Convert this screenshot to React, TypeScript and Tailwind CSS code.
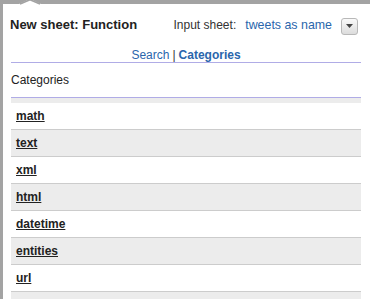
import React from "react";

const items = ["math", "text", "xml", "html", "datetime", "entities", "url"];

export default function App() {
  return (
    <div
      className="relative w-[370px] h-[299px] overflow-hidden bg-white"
      style={{ fontFamily: '"Liberation Sans", Arial, sans-serif' }}
    >
      <div className="h-full border-t-4 border-l-[3px] border-[#a3a3a3]">
        <div className="pl-[8px] pr-[9px]">
          <div className="flex items-center h-[18px] mt-[13px]">
            <div className="-ml-px -mt-[2px] text-[13px] font-bold leading-[16px] text-[#222]">New sheet: Function</div>
            <div className="ml-auto flex items-center">
              <span className="text-[12px] leading-[14px] text-[#333] -mt-[2px]">Input sheet:</span>
              <span className="ml-[9px] text-[12.4px] leading-[14px] text-[#2a66ac] -mt-[2px]">tweets as name</span>
              <div className="ml-[9px] mr-[3px] w-[17px] h-[17px] rounded-[3px] border border-[#b8b8b8] bg-gradient-to-b from-[#fafafa] to-[#dcdcdc] flex items-center justify-center">
                <svg width="7" height="4" viewBox="0 0 7 4">
                  <polygon points="0,0 7,0 3.5,4" fill="#444" />
                </svg>
              </div>
            </div>
          </div>
          <div className="mt-[13px] h-[15px] border-b border-[#b0ace6] flex justify-center items-start text-[12px] leading-[14px]">
            <span className="text-[#2a66ac]">Search</span>
            <span className="text-[#333] mx-[3px]">|</span>
            <span className="text-[#2a66ac] font-bold">Categories</span>
          </div>
          <div className="h-[35px] pt-[10px] border-b border-[#b0ace6] text-[12px] leading-[14px] text-[#222]">
            Categories
          </div>
          <div className="h-[5px] bg-[#ececec]" />
          {items.map((it, i) => (
            <div
              key={it}
              className={`h-[27px] border-b border-[#cccccc] flex items-center pl-[5px] ${i % 2 === 0 ? "bg-white" : "bg-[#ececec]"}`}
            >
              <span className="text-[12px] font-bold underline text-[#222] leading-[14px]">{it}</span>
            </div>
          ))}
          <div className="h-[27px] bg-[#ececec]" />
        </div>
      </div>
      <svg className="absolute left-[19px] top-0" width="22" height="6" viewBox="0 0 22 6">
        <polygon points="0,4 11,-1 22,4 22,6 0,6" fill="#ffffff" />
        <polyline points="1,4 11,-0.3 21,4" fill="none" stroke="#a3a3a3" strokeWidth="1.6" />
      </svg>
    </div>
  );
}
